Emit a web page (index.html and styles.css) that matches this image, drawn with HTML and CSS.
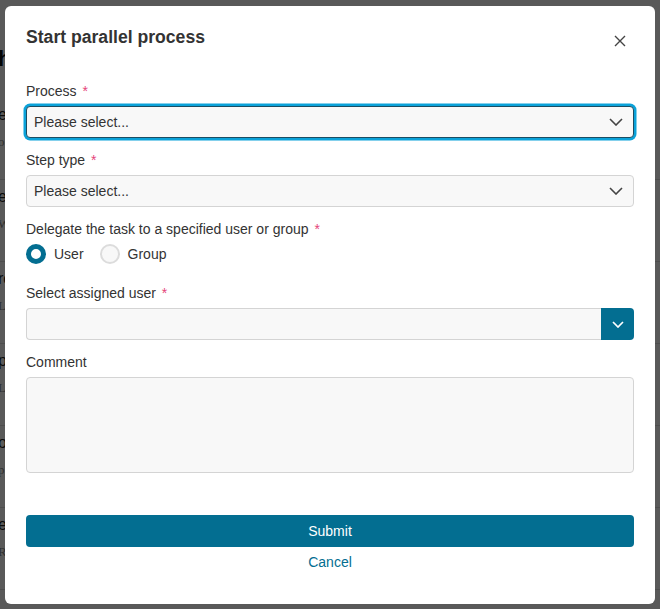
FILE: index.html
```html
<!DOCTYPE html>
<html lang="en">
<head>
<meta charset="utf-8">
<title>Start parallel process</title>
<link rel="stylesheet" href="styles.css">
</head>
<body>
<div class="page">
  <h1 class="page-title">h</h1>
  <ul class="items">
    <li><div class="it-title">e</div><div class="it-sub">o</div></li>
    <li><div class="it-title">ea</div><div class="it-sub">W</div></li>
    <li><div class="it-title">ro</div><div class="it-sub">L</div></li>
    <li><div class="it-title">p</div><div class="it-sub">L</div></li>
    <li><div class="it-title">o</div><div class="it-sub">p</div></li>
    <li><div class="it-title">e</div><div class="it-sub">R</div></li>
  </ul>
</div>
<div class="overlay"></div>
<div class="modal" role="dialog" aria-labelledby="dlg-title">
  <div class="modal-head">
    <h2 id="dlg-title" class="modal-title">Start parallel process</h2>
    <button class="close" aria-label="Close">
      <svg width="12" height="12" viewBox="0 0 12 12"><path d="M1 1 L11 11 M11 1 L1 11" stroke="#444" stroke-width="1.4" fill="none"/></svg>
    </button>
  </div>
  <form class="form">
    <div class="field">
      <label class="label">Process <span class="req">*</span></label>
      <div class="select focused">
        <span>Please select...</span>
        <svg class="chev" width="14" height="8" viewBox="0 0 14 8"><path d="M1 1 L7 7 L13 1" stroke="#444" stroke-width="1.6" fill="none"/></svg>
      </div>
    </div>
    <div class="field">
      <label class="label">Step type <span class="req">*</span></label>
      <div class="select">
        <span>Please select...</span>
        <svg class="chev" width="14" height="8" viewBox="0 0 14 8"><path d="M1 1 L7 7 L13 1" stroke="#444" stroke-width="1.6" fill="none"/></svg>
      </div>
    </div>
    <div class="field radios-field">
      <label class="label">Delegate the task to a specified user or group <span class="req">*</span></label>
      <div class="radios">
        <span class="radio"><span class="dot on"></span>User</span>
        <span class="radio"><span class="dot"></span>Group</span>
      </div>
    </div>
    <div class="field">
      <label class="label">Select assigned user <span class="req">*</span></label>
      <div class="combo">
        <div class="combo-input"></div>
        <div class="combo-btn">
          <svg width="12" height="7" viewBox="0 0 12 7"><path d="M1 1 L6 6 L11 1" stroke="#fff" stroke-width="1.7" fill="none"/></svg>
        </div>
      </div>
    </div>
    <div class="field">
      <label class="label">Comment</label>
      <div class="textarea"></div>
    </div>
    <div class="actions">
      <button type="button" class="submit">Submit</button>
      <a class="cancel" href="#">Cancel</a>
    </div>
  </form>
</div>
</body>
</html>
```
FILE: styles.css
```css
html, body {
  margin: 0;
  padding: 0;
  height: 100%;
  overflow: hidden;
}
body {
  font-family: "Liberation Sans", Arial, sans-serif;
  background: #fff;
  color: #333;
}
.page {
  margin-left: -2px;
  padding-top: 46px;
}
.page-title {
  margin: 0 0 26px 0;
  font-size: 22px;
  font-weight: bold;
  color: #111;
}
.items {
  list-style: none;
  margin: 0;
  padding: 0;
}
.items li {
  height: 82px;
  border-bottom: 1px solid #ddd;
  box-sizing: border-box;
  padding-top: 6px;
}
.it-title {
  font-size: 16px;
  color: #222;
  line-height: 22px;
}
.it-sub {
  font-size: 13px;
  color: #888;
  margin-top: 8px;
  font-family: "Liberation Serif", serif;
}
.overlay {
  position: fixed;
  inset: 0;
  background: rgba(0, 0, 0, 0.65);
}
.modal {
  position: fixed;
  left: 5px;
  top: 6px;
  width: 650px;
  height: 598px;
  box-sizing: border-box;
  background: #fff;
  border-radius: 6px;
  padding: 19px 21px 0 21px;
}
.modal-head {
  display: flex;
  justify-content: space-between;
  align-items: flex-start;
}
.modal-title {
  margin: 0;
  font-size: 17.6px;
  line-height: 24px;
  font-weight: bold;
  color: #333;
}
.close {
  border: 0;
  background: none;
  padding: 0;
  margin: 10px 8px 0 0;
  width: 12px;
  height: 12px;
  display: flex;
}
.form {
  margin-top: 32px;
  display: flex;
  flex-direction: column;
}
.field {
  display: flex;
  flex-direction: column;
  margin-bottom: 12px;
}
.label {
  font-size: 14px;
  line-height: 20px;
  color: #333;
  margin-bottom: 5px;
}
.req {
  color: #e5457a;
  margin-left: 2px;
}
.select {
  height: 32px;
  box-sizing: border-box;
  border: 1px solid #d4d4d4;
  border-radius: 4px;
  background: #f8f8f8;
  display: flex;
  align-items: center;
  justify-content: space-between;
  padding: 0 10px 0 7px;
  font-size: 14px;
  color: #333;
}
.select.focused {
  border-color: #1b4d63;
  box-shadow: 0 0 0 2.5px #0ba2d9;
}
.radios-field {
  margin-bottom: 19px;
}
.radios {
  display: flex;
  gap: 16px;
  height: 20px;
  align-items: center;
}
.radio {
  display: flex;
  align-items: center;
  gap: 8px;
  font-size: 14px;
  color: #333;
}
.dot {
  width: 20px;
  height: 20px;
  box-sizing: border-box;
  border-radius: 50%;
  border: 2px solid #dcdcdc;
  background: #f8f8f8;
}
.dot.on {
  border: 5px solid #036e91;
  background: #fff;
}
.combo {
  display: flex;
  height: 32px;
}
.combo-input {
  flex: 1;
  box-sizing: border-box;
  border: 1px solid #d4d4d4;
  border-right: 0;
  border-radius: 4px 0 0 4px;
  background: #f8f8f8;
}
.combo-btn {
  width: 33px;
  background: #036e91;
  border-radius: 0 4px 4px 0;
  display: flex;
  align-items: center;
  justify-content: center;
}
.textarea {
  height: 96px;
  box-sizing: border-box;
  border: 1px solid #d4d4d4;
  border-radius: 4px;
  background: #f8f8f8;
}
.actions {
  margin-top: 30px;
  display: flex;
  flex-direction: column;
  align-items: center;
}
.submit {
  width: 100%;
  height: 32px;
  border: 0;
  border-radius: 4px;
  background: #036e91;
  color: #fff;
  font-family: "Liberation Sans", Arial, sans-serif;
  font-size: 14px;
}
.cancel {
  margin-top: 5px;
  font-size: 14px;
  line-height: 20px;
  color: #036e91;
  text-decoration: none;
}
```
